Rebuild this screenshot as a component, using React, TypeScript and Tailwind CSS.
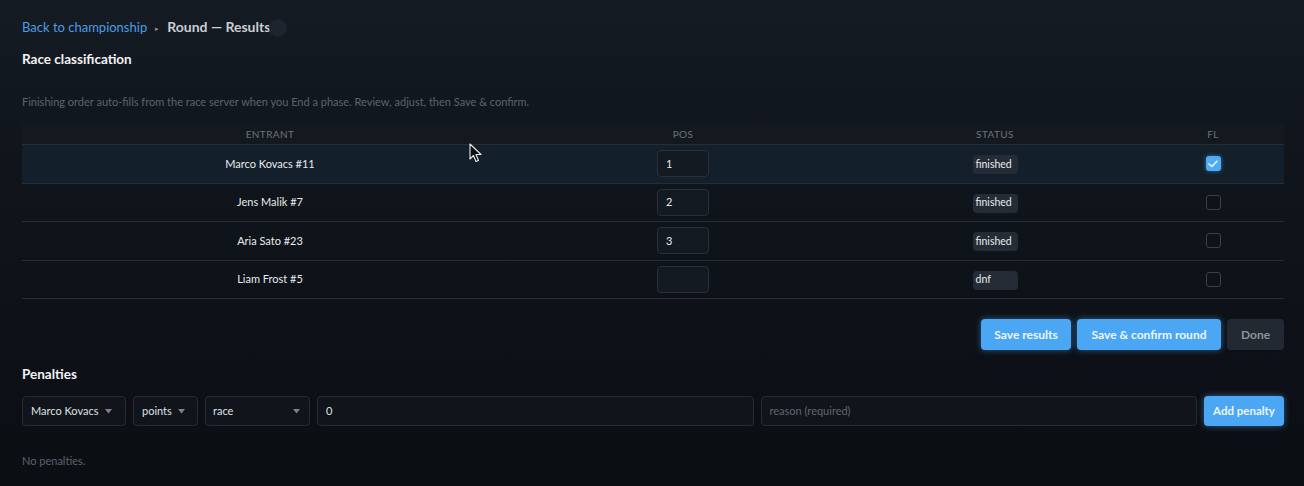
import React from "react";

const font = { fontFamily: "Lato, 'Liberation Sans', sans-serif" };

function Caret() {
  return (
    <svg width="7" height="5" viewBox="0 0 7 5" className="shrink-0">
      <path d="M0 0 L7 0 L3.5 4.5 Z" fill="#7b818a" />
    </svg>
  );
}

function Check({ checked }: { checked?: boolean }) {
  if (checked)
    return (
      <div className="w-[15px] h-[15px] rounded-[3px] bg-[#52aaf4] flex items-center justify-center shadow-[0_0_4px_rgba(75,166,242,0.6)]">
        <svg width="10" height="8" viewBox="0 0 10 8">
          <path d="M1 4 L3.8 6.5 L9 1.2" stroke="#eaf5ff" strokeWidth="1.6" fill="none" strokeLinecap="round" strokeLinejoin="round" />
        </svg>
      </div>
    );
  return <div className="w-[15px] h-[15px] rounded-[3px] border border-[#3a414a] bg-[#0f1318]" />;
}

const rows = [
  { name: "Marco Kovacs #11", pos: "1", status: "finished", fl: true, hl: true },
  { name: "Jens Malik #7", pos: "2", status: "finished", fl: false },
  { name: "Aria Sato #23", pos: "3", status: "finished", fl: false },
  { name: "Liam Frost #5", pos: "", status: "dnf", fl: false },
];

export default function App() {
  return (
    <div
      style={font}
      className="relative w-[1304px] h-[486px] overflow-hidden bg-[linear-gradient(180deg,#151b23_0%,#10151c_35%,#0b0e13_100%)] pl-[22px] pr-[20px] text-[#e4e7eb]"
    >
      {/* breadcrumb */}
      <div className="h-[20px] mt-[18px] flex items-center text-[13px]">
        <span className="text-[#4a9ee0]">Back to championship</span>
        <span className="ml-[8px] mr-[8px] text-[7px] text-[#8a9099]">▸</span>
        <span className="font-bold text-[14px] leading-none mb-[3px] text-[#c9ced4]">Round — Results</span>
        <span className="ml-[-1px] w-[18px] h-[18px] rounded-full bg-[#1d242d]" />
      </div>

      <div className="mt-[12px] h-[18px] flex items-center text-[13.5px] font-bold text-[#f1f3f5]">Race classification</div>

      <div className="mt-[26px] h-[16px] flex items-center text-[11px] text-[#5c636c]">
        Finishing order auto-fills from the race server when you End a phase. Review, adjust, then Save &amp; confirm.
      </div>

      {/* table */}
      <div className="mt-[14px] w-[1262px]">
        <div className="grid grid-cols-[496px_330px_294px_1fr] h-[21px] items-center bg-[#141920] border-b border-[#252d36] text-[10px] tracking-[0.04em] text-[#6c737c]">
          <div className="text-center">ENTRANT</div>
          <div className="text-center">POS</div>
          <div className="text-center">STATUS</div>
          <div className="text-center">FL</div>
        </div>
        {rows.map((r) => (
          <div
            key={r.name}
            className={`grid grid-cols-[496px_330px_294px_1fr] h-[38.5px] items-center border-b border-[#262d36] ${r.hl ? "bg-[#13202b]" : ""}`}
          >
            <div className="text-center text-[11px] text-[#e8ebee]">{r.name}</div>
            <div className="flex justify-center">
              <div className="w-[52px] h-[27px] rounded-[4px] border border-[#28303a] bg-[#141a21] flex items-center pl-[8px] text-[11px] text-[#e8ebee]">
                {r.pos}
              </div>
            </div>
            <div className="flex justify-center">
              <div className="w-[45px] h-[19px] mt-[2px] rounded-[4px] bg-[#252c35] flex items-center pl-[3px] text-[10.5px] text-[#e8ebee]">
                {r.status}
              </div>
            </div>
            <div className="flex justify-center">
              <Check checked={r.fl} />
            </div>
          </div>
        ))}
      </div>

      {/* buttons */}
      <div className="mt-[20px] w-[1262px] flex justify-end gap-[6px]">
        <button className="w-[90px] h-[31px] rounded-[4px] bg-[#4ba6f4] text-[12px] font-bold text-[#eef6ff] shadow-[0_0_6px_rgba(75,166,244,0.55)]">
          Save results
        </button>
        <button className="w-[144px] h-[31px] rounded-[4px] bg-[#4ba6f4] text-[12px] font-bold text-[#eef6ff] shadow-[0_0_6px_rgba(75,166,244,0.55)]">
          Save &amp; confirm round
        </button>
        <button className="w-[57px] h-[31px] rounded-[4px] bg-[#222932] text-[12px] font-bold text-[#8c939b]">Done</button>
      </div>

      <div className="mt-[16px] h-[16px] flex items-center text-[13.5px] font-bold text-[#f1f3f5]">Penalties</div>

      {/* penalty row */}
      <div className="mt-[14px] w-[1262px] flex gap-[7px] h-[30px] text-[11px]">
        <div className="w-[104px] rounded-[4px] border border-[#262c35] bg-[#11151b] flex items-center pl-[8px] gap-[6px]">
          <span className="text-[#dde1e5]">Marco Kovacs</span>
          <Caret />
        </div>
        <div className="w-[65px] rounded-[4px] border border-[#262c35] bg-[#11151b] flex items-center pl-[8px] gap-[6px]">
          <span className="text-[#dde1e5]">points</span>
          <Caret />
        </div>
        <div className="w-[105px] rounded-[4px] border border-[#262c35] bg-[#11151b] flex items-center justify-between pl-[7px] pr-[9px]">
          <span className="text-[#dde1e5]">race</span>
          <Caret />
        </div>
        <div className="flex-1 rounded-[4px] border border-[#262c35] bg-[#11151b] flex items-center pl-[8px] text-[#dde1e5]">0</div>
        <div className="flex-1 rounded-[4px] border border-[#262c35] bg-[#11151b] flex items-center pl-[8px] text-[#5f666f]">
          reason (required)
        </div>
        <button className="w-[80px] rounded-[4px] bg-[#4ba6f4] text-[11.5px] font-bold text-[#eef6ff] shadow-[0_0_6px_rgba(75,166,244,0.55)]">
          Add penalty
        </button>
      </div>

      <div className="mt-[27px] h-[16px] flex items-center text-[11px] text-[#5c636c]">No penalties.</div>

      {/* mouse cursor */}
      <svg className="absolute left-[469px] top-[143px]" width="14" height="20" viewBox="0 0 14 20">
        <path d="M1 1 L1 16 L4.5 12.5 L7 18.5 L9.5 17.5 L7 11.5 L12 11.5 Z" fill="#0b0e13" stroke="#e8ebee" strokeWidth="1.1" strokeLinejoin="round" />
      </svg>
    </div>
  );
}
